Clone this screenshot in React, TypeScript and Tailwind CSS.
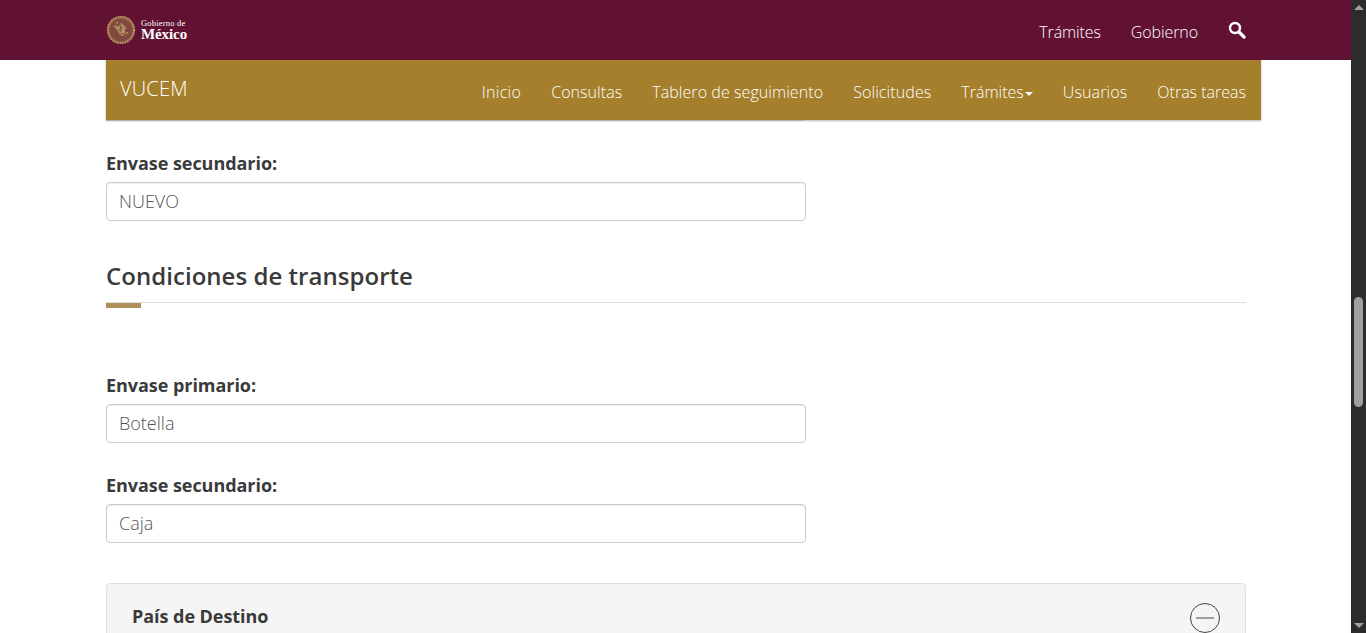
const openSans = "font-['Open_Sans',sans-serif]";

function Emblem() {
  return (
    <svg width="30" height="30" viewBox="0 0 30 30" className="shrink-0">
      <circle cx="15" cy="15" r="14" fill="#84503f" />
      <circle cx="15" cy="15" r="13" fill="none" stroke="#bd9566" strokeWidth="2.2" strokeDasharray="1.6 0.9" />
      <circle cx="15" cy="15" r="10.600" fill="#80493f" />
      <path d="M6.500 17c1.500 6 15.500 6 17 0-1 2.500-4 4.500-8.500 4.500S7.500 19.500 6.500 17z" fill="#c09a68" />
      <path d="M9 10l3.500 1 2.500-3 3 2 2.500 3.500-2 1.500 1 3.500-3 2.500-3-1-1.500-3.500-3-2z" fill="#b08a5c" />
      <path d="M8 13l3 2.500M18.500 9l3 3.500M12 19.500l6-1M9 17.500l3-6.500M14 9l1 8M17 12l-5 4" stroke="#74503a" strokeWidth="0.9" fill="none" />
      <path d="M10 7.500l2 1M20 19l2-2M7.500 11l1 1M11 13l2-1M16 17l2-1" stroke="#d3b184" strokeWidth="0.9" fill="none" />
    </svg>
  );
}

function Field({ label, value }: { label: string; value: string }) {
  return (
    <div className="w-[700px]">
      <label className="block text-[18px] leading-[25px] font-bold tracking-[-0.05px] text-[#3a3a3a]">{label}</label>
      <div className="mt-[6px] h-[39px] px-3 flex items-center bg-white border border-[#ccc] rounded-[4px] text-[18px] font-light text-[#555] shadow-[inset_0_1px_1px_rgba(0,0,0,0.075)]">
        {value}
      </div>
    </div>
  );
}

export default function App() {
  return (
    <div className={`${openSans} flex h-[633px] w-[1366px] overflow-hidden bg-white`}>
      <div className="w-[1351px] shrink-0 overflow-hidden">
        {/* Top government bar */}
        <header className="h-[60px] bg-[#611232] pl-[106px] pr-[105px] flex items-center justify-between">
          <div className="flex items-center gap-[5px]">
            <Emblem />
            <div className="flex flex-col font-['Liberation_Serif',serif] text-white">
              <span className="text-[8.5px] leading-[9px] tracking-[0.2px]">Gobierno de</span>
              <span className="text-[15px] leading-[13px] font-bold tracking-[-0.1px]">México</span>
            </div>
          </div>
          <nav className="flex items-center gap-[30px] text-[16px] font-light text-white pt-[4px]">
            <span className="tracking-[-0.1px]">Trámites</span>
            <span className="tracking-[-0.1px]">Gobierno</span>
            <svg width="18" height="18" viewBox="0 0 18 18" className="-mt-[4px]" fill="none" stroke="white">
              <circle cx="7" cy="7" r="5" strokeWidth="2.4" />
              <path d="M11 11l5 5" strokeWidth="3.2" strokeLinecap="round" />
            </svg>
          </nav>
        </header>

        {/* Section nav */}
        <div className="pl-[106px]">
          <div className="w-[1155px] h-[60px] bg-[#a57f2c] shadow-[0_1px_2px_rgba(0,0,0,0.3)] flex justify-between pl-[14px] pr-[15px] text-white relative z-10">
            <span className="text-[20px] leading-[58px] font-light tracking-[0.2px]">VUCEM</span>
            <nav className="flex items-center gap-[30px] text-[16px] font-light pt-[4px]">
              <span className="tracking-[0.3px]">Inicio</span>
              <span className="tracking-[0.05px]">Consultas</span>
              <span className="tracking-[0.07px]">Tablero de seguimiento</span>
              <span className="tracking-[0.1px]">Solicitudes</span>
              <span className="flex items-center">
                Trámites
                <span className="ml-[1px] mt-[3px] border-x-[4px] border-t-[4px] border-x-transparent border-t-white" />
              </span>
              <span className="tracking-[0.12px]">Usuarios</span>
              <span>Otras tareas</span>
            </nav>
          </div>
        </div>

        {/* Form content */}
        <main className="pl-[106px] w-[1246px]">
          <div className="w-[697px] h-px bg-[#ddd]" />
          <div className="pt-[30px]">
            <Field label="Envase secundario:" value="NUEVO" />
          </div>

          <div className="mt-[37px]">
            <h3 className="text-[24px] leading-[36px] font-semibold tracking-[0.04px] text-[#3a3a3a]">Condiciones de transporte</h3>
            <div className="mt-[8px] h-px bg-[#e0e0e0]" />
            <div className="w-[35px] h-[5px] bg-[#b08f5a]" />
          </div>

          <div className="mt-[65px] flex flex-col gap-[30px]">
            <Field label="Envase primario:" value="Botella" />
            <Field label="Envase secundario:" value="Caja" />
          </div>

          <section className="mt-[40px] h-[100px] bg-[#f5f5f5] border border-[#ddd] rounded-[4px] px-[25px] pt-[20px] flex justify-between items-start">
            <h4 className="text-[18px] leading-[25px] font-bold tracking-[-0.05px] text-[#3a3a3a]">País de Destino</h4>
            <svg width="30" height="30" viewBox="0 0 30 30" fill="none" stroke="#444" className="-mt-[1px]">
              <circle cx="15" cy="15" r="14.500" />
              <path d="M6 15h18" />
            </svg>
          </section>
        </main>
      </div>

      {/* Browser scrollbar */}
      <div className="w-[15px] shrink-0 bg-[#2c2c2c] flex flex-col items-center relative">
        <span className="mt-[5px] border-x-[5px] border-b-[5px] border-x-transparent border-b-[#a0a0a0]" />
        <div className="absolute top-[297px] left-[3px] w-[9px] h-[110px] rounded-full bg-[#9f9f9f]" />
        <span className="absolute bottom-[5px] border-x-[5px] border-t-[5px] border-x-transparent border-t-[#a0a0a0]" />
      </div>
    </div>
  );
}
